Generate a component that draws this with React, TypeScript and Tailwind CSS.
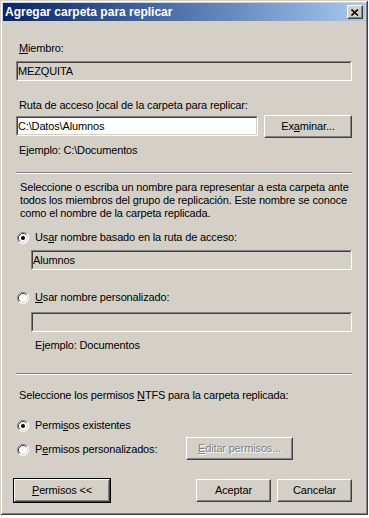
import React from 'react';

const U = ({ children }: { children: React.ReactNode }) => (
  <span className="underline underline-offset-[1px] decoration-[1px]">{children}</span>
);

const Label = ({ children, className = '' }: { children: React.ReactNode; className?: string }) => (
  <div className={`h-[13px] leading-[13px] whitespace-nowrap ${className}`}>{children}</div>
);

const Field = ({ value = '', white = false, className = '' }: { value?: string; white?: boolean; className?: string }) => (
  <div className={`h-[20px] border border-t-[#808080] border-l-[#808080] border-b-white border-r-white ${className}`}>
    <div
      className={`h-full border border-t-[#404040] border-l-[#404040] border-b-[#d4d0c8] border-r-[#d4d0c8] flex items-center whitespace-nowrap ${
        white ? 'bg-white' : 'bg-[#d4d0c8]'
      }`}
    >
      {value}
    </div>
  </div>
);

const Button = ({
  children,
  className = '',
  isDefault = false,
  disabled = false,
}: {
  children: React.ReactNode;
  className?: string;
  isDefault?: boolean;
  disabled?: boolean;
}) => {
  const inner = (
    <div className="h-full border border-t-white border-l-white border-b-[#404040] border-r-[#404040]">
      <div
        className={`h-full border border-t-[#d4d0c8] border-l-[#d4d0c8] border-b-[#808080] border-r-[#808080] flex items-center justify-center whitespace-nowrap ${
          disabled ? 'text-[#808080] [text-shadow:1px_1px_0_#ffffff]' : ''
        }`}
      >
        {children}
      </div>
    </div>
  );
  if (isDefault) {
    return <div className={`border border-black ${className}`}>{inner}</div>;
  }
  return <div className={className}>{inner}</div>;
};

const Radio = ({ checked = false }: { checked?: boolean }) => (
  <svg width="12" height="12" viewBox="0 0 12 12" className="shrink-0">
    <circle cx="6" cy="6" r="5.5" fill="#ffffff" />
    <path d="M2.11 9.89 A5.5 5.5 0 0 1 9.89 2.11" stroke="#808080" strokeWidth="1" fill="none" />
    <path d="M9.89 2.11 A5.5 5.5 0 0 1 2.11 9.89" stroke="#ffffff" strokeWidth="1" fill="none" />
    <path d="M2.82 9.18 A4.5 4.5 0 0 1 9.18 2.82" stroke="#404040" strokeWidth="1" fill="none" />
    <path d="M9.18 2.82 A4.5 4.5 0 0 1 2.82 9.18" stroke="#d4d0c8" strokeWidth="1" fill="none" />
    {checked && <circle cx="6" cy="6" r="2" fill="#000000" />}
  </svg>
);

const Separator = ({ className = '' }: { className?: string }) => (
  <div className={`h-[2px] border-t border-t-[#808080] border-b border-b-white ${className}`} />
);

export default function App() {
  return (
    <div className="min-h-screen bg-white">
      <div className="w-[368px] h-[515px] bg-[#d4d0c8] p-[3px] flex flex-col shadow-[inset_1px_1px_0_#d4d0c8,inset_-1px_-1px_0_#404040,inset_2px_2px_0_#ffffff,inset_-2px_-2px_0_#808080] font-['Liberation_Sans',Arial,sans-serif] text-[11px] tracking-[-0.15px] text-black">
        {/* title bar */}
        <div className="h-[18px] flex items-center justify-between bg-linear-to-r from-[#0a246a] to-[#a6caf0] pl-[2px] pr-[2px]">
          <span className="text-white font-bold text-[12px] tracking-normal leading-none">
            Agregar carpeta para replicar
          </span>
          <div className="w-[16px] h-[14px] border border-t-white border-l-white border-b-[#404040] border-r-[#404040] bg-[#d4d0c8]">
            <div className="h-full border border-t-[#d4d0c8] border-l-[#d4d0c8] border-b-[#808080] border-r-[#808080] flex items-center justify-center">
              <svg width="8" height="7" viewBox="0 0 8 7">
                <path d="M0.5 0.5 L7 6.5 M7 0.5 L0.5 6.5" stroke="#000" strokeWidth="1.6" />
              </svg>
            </div>
          </div>
        </div>

        {/* body */}
        <div className="px-[13px] flex flex-col">
          <Label className="mt-[21px] ml-[3px]">
            <U>M</U>iembro:
          </Label>
          <Field value="MEZQUITA" className="mt-[6px]" />

          <Label className="mt-[18px] ml-[3px]">
            Ruta de acceso <U>l</U>ocal de la carpeta para replicar:
          </Label>
          <div className="mt-[3px] flex items-start gap-[6px]">
            <Field value={'C:\\Datos\\Alumnos'} white className="mt-[1px] w-[242px]" />
            <Button className="w-[88px] h-[23px]">
              Ex<U>a</U>minar...
            </Button>
          </div>
          <Label className="mt-[6px] ml-[3px]">Ejemplo: C:\Documentos</Label>

          <Separator className="mt-[15px]" />

          <div className="mt-[7px] ml-[4px] leading-[13px] whitespace-nowrap">
            Seleccione o escriba un nombre para representar a esta carpeta ante
            <br />
            todos los miembros del grupo de replicación. Este nombre se conoce
            <br />
            como el nombre de la carpeta replicada.
          </div>

          <div className="mt-[11px] h-[13px] flex items-center gap-[6px] ml-[1px]">
            <Radio checked />
            <span className="whitespace-nowrap">
              Us<U>a</U>r nombre basado en la ruta de acceso:
            </span>
          </div>
          <Field value="Alumnos" className="mt-[6px] ml-[15px]" />

          <div className="mt-[21px] h-[13px] flex items-center gap-[6px] ml-[1px]">
            <Radio />
            <span className="whitespace-nowrap">
              <U>U</U>sar nombre personalizado:
            </span>
          </div>
          <Field className="mt-[8px] ml-[15px]" />
          <Label className="mt-[7px] ml-[19px]">Ejemplo: Documentos</Label>

          <Separator className="mt-[21px]" />

          <Label className="mt-[14px] ml-[3px]">
            Seleccione los permisos <U>N</U>TFS para la carpeta replicada:
          </Label>

          <div className="mt-[17px] h-[13px] flex items-center gap-[6px] ml-[1px]">
            <Radio checked />
            <span className="whitespace-nowrap">
              Permi<U>s</U>os existentes
            </span>
          </div>

          <div className="mt-[5px] h-[23px] flex items-center">
            <div className="w-[170px] flex items-center gap-[6px] pl-[1px] pt-[2px]">
              <Radio />
              <span className="whitespace-nowrap">
                P<U>e</U>rmisos personalizados:
              </span>
            </div>
            <Button disabled className="w-[107px] h-[23px]">
              <U>E</U>ditar permisos...
            </Button>
          </div>

          <div className="mt-[18px] flex items-start">
            <Button isDefault className="ml-[-3px] w-[98px] h-[25px]">
              <U>P</U>ermisos &lt;&lt;
            </Button>
            <div className="flex-1" />
            <Button className="mt-[1px] w-[75px] h-[23px]">Aceptar</Button>
            <Button className="mt-[1px] ml-[6px] w-[75px] h-[23px]">Cancelar</Button>
          </div>
        </div>
      </div>
    </div>
  );
}
